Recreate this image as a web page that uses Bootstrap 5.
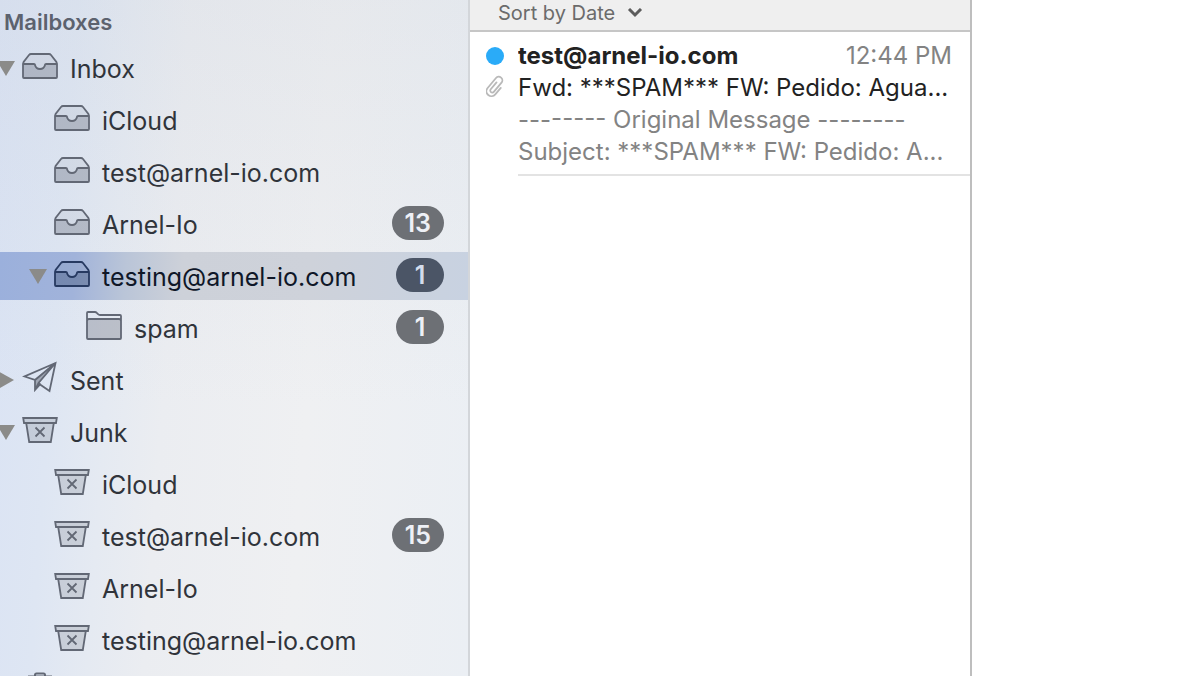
<!DOCTYPE html>
<html lang="en">
<head>
<meta charset="utf-8">
<meta name="viewport" content="width=device-width, initial-scale=1">
<title>Mail</title>
<link href="https://cdn.jsdelivr.net/npm/bootstrap@5.3.0/dist/css/bootstrap.min.css" rel="stylesheet">
<style>
  body { font-family: Inter, "Liberation Sans", sans-serif; color: #222; }
  .mail-app { display: grid; grid-template-columns: 470fr 502fr 216fr; }

  /* Mailbox sidebar */
  .mailboxes {
    border-right: 2px solid #d3d6da;
    background:
      linear-gradient(180deg, rgba(200, 206, 216, .22), rgba(230, 236, 250, 0) 60%),
      linear-gradient(94deg, #dae3f4 0%, #dee6f3 15%, #e5eaf2 26%, #ebedf1 37%, #eff0f2 65%, #ebeff4 100%);
  }
  .mailboxes-title { font-size: 22px; line-height: 44px; padding-left: 4px; font-weight: 600; color: #5c626e; }
  .mailbox { height: 48px; margin-bottom: 4px; padding-right: 24px; }
  .mailbox.level-1 { padding-left: 32px; }
  .mailbox.level-2 { padding-left: 64px; }
  .mailbox.active { background: linear-gradient(94deg, #9bb0dc 0%, #a1b3da 16%, #bac5d8 27%, #cdd1d9 39%, #ced2da 66%, #c8d2e1 100%); }
  .twisty { width: 22px; padding: 0 7px 0 0; }
  .twisty svg { width: 18px; height: 18px; fill: #8b8b89; }
  .mailbox-icon { width: 36px; height: 36px; margin-bottom: 10px; color: #626875; }
  .mailbox-link { font-size: 25px; line-height: 48px; gap: 12px; padding-top: 2px; color: #30343b; }
  .active .mailbox-link { color: #0f1728; }
  .active .mailbox-icon { color: #273a61; }
  .unread-count { min-width: 48px; height: 34px; margin-bottom: 2px; padding: 0 13px; border-radius: 17px; font-size: 25px; line-height: 34px; font-weight: 600; background: #6d7075; color: #eef0f6; }
  .active .unread-count { background: #4b5566; color: #d3dcec; }

  /* Message list */
  .message-list { border-right: 2px solid #bebebe; }
  .sort-bar { height: 32px; background: #efefef; border-bottom: 2px solid #c6c6c6; }
  .sort-button { font-size: 20px; line-height: 26px; padding-left: 28px; gap: 12px; color: #6b6b6b; }
  .message { padding: 8px 0 0 16px; gap: 14px; font-size: 24px; line-height: 32px; }
  .message-marks { width: 18px; }
  .message-marks > span { height: 31px; }
  .unread-dot { width: 18px; height: 18px; background: #2aabf8; }
  .message-body { border-bottom: 2px solid #e3e3e3; padding-bottom: 6px; }
  .message-body > div { padding-right: 18px; }
  .muted { color: #838383; }
</style>
</head>
<body>
<svg class="d-none" aria-hidden="true">
  <symbol id="down" viewBox="0 0 18 18"><path d="M0 2h18L9 17z"/></symbol>
  <symbol id="right" viewBox="0 0 18 18"><path d="M1 0v18l16-9z"/></symbol>
  <symbol id="tray" viewBox="0 0 36 36">
    <path d="M1 17h12c.5 4 2.500 5.500 5 5.500s4.500-1.500 5-5.500h12v14q0 1-1 1H2q-1 0-1-1z" fill="currentColor" fill-opacity=".34"/>
    <path d="M1 17 7.500 9q.8-1 2-1h17q1.200 0 2 1L35 17H23c-.5 4-2.500 5.500-5 5.500S13.500 21 13 17z" fill="currentColor" fill-opacity=".08"/>
    <path d="M1 18v13q0 1 1 1h32q1 0 1-1V18l-.6-2-5.400-7q-.8-1-2-1H9Q7.800 8 7 9l-5.400 7zM1.500 18h10q1.500 0 1.500 1c.6 2.500 2.500 4 5 4s4.400-1.500 5-4q0-1 1.500-1h10" fill="none" stroke="currentColor" stroke-width="1.800"/>
  </symbol>
  <symbol id="folder" viewBox="0 0 36 36">
    <path d="M1 14h34v18q0 1-1 1H2q-1 0-1-1z" fill="currentColor" fill-opacity=".32"/>
    <path d="M1 7q0-1 1-1h7q1 0 1.800 1l1.200 1.200q.8.800 2 .8h20q1 0 1 1v22q0 1-1 1H2q-1 0-1-1zM1 15q0-2 2-2h30q2 0 2 2" fill="none" stroke="currentColor" stroke-width="1.800"/>
  </symbol>
  <symbol id="plane" viewBox="0 0 36 36">
    <path d="M33 5 13 21v11l5-8z" fill="currentColor" fill-opacity=".5"/>
    <path d="M33.500 5 2.500 18.500 13 22v10l5-5.500 9.500 6.500zM33.500 5 13 22M33.500 5 16.500 25M13 32l3.500-7 2 1.500" fill="none" stroke="currentColor" stroke-width="1.800"/>
  </symbol>
  <symbol id="bin" viewBox="0 0 36 36">
    <path d="M1 8h34l-.8 5H1.800zM4 13h28l-3 19H7z" fill="currentColor" fill-opacity=".2"/>
    <path d="M1.200 8h33.600l-.8 5H2zM4.200 13 7.200 32h21.600l3-19M13.500 17.500l9 9M22.500 17.500l-9 9" fill="none" stroke="currentColor" stroke-width="1.800"/>
  </symbol>
  <symbol id="trash" viewBox="0 0 36 36">
    <path d="M13 7V5q0-1.500 1.500-1.500h7Q23 3.500 23 5v2M6 6.500h24M8 7l2 25h16l2-25" fill="none" stroke="currentColor" stroke-width="2"/>
  </symbol>
</svg>

<div class="mail-app vh-100 overflow-hidden">
  <nav class="mailboxes overflow-hidden" aria-label="Mailboxes">
    <h1 class="mailboxes-title m-0">Mailboxes</h1>

    <div class="mailbox d-flex align-items-center">
      <button class="twisty border-0 bg-transparent d-flex justify-content-end flex-shrink-0" aria-label="Collapse Inbox"><svg class="flex-shrink-0"><use href="#down"/></svg></button>
      <a href="#" class="mailbox-link d-flex align-items-center flex-grow-1 text-nowrap text-decoration-none"><svg class="mailbox-icon"><use href="#tray"/></svg>Inbox</a>
    </div>
    <div class="mailbox level-1 d-flex align-items-center">
      <span class="twisty flex-shrink-0"></span>
      <a href="#" class="mailbox-link d-flex align-items-center flex-grow-1 text-nowrap text-decoration-none"><svg class="mailbox-icon"><use href="#tray"/></svg>iCloud</a>
    </div>
    <div class="mailbox level-1 d-flex align-items-center">
      <span class="twisty flex-shrink-0"></span>
      <a href="#" class="mailbox-link d-flex align-items-center flex-grow-1 text-nowrap text-decoration-none"><svg class="mailbox-icon"><use href="#tray"/></svg>test@arnel-io.com</a>
    </div>
    <div class="mailbox level-1 d-flex align-items-center">
      <span class="twisty flex-shrink-0"></span>
      <a href="#" class="mailbox-link d-flex align-items-center flex-grow-1 text-nowrap text-decoration-none"><svg class="mailbox-icon"><use href="#tray"/></svg>Arnel-Io</a>
      <span class="unread-count text-center">13</span>
    </div>
    <div class="mailbox level-1 active d-flex align-items-center">
      <button class="twisty border-0 bg-transparent d-flex justify-content-end flex-shrink-0" aria-label="Collapse testing@arnel-io.com"><svg class="flex-shrink-0"><use href="#down"/></svg></button>
      <a href="#" class="mailbox-link d-flex align-items-center flex-grow-1 text-nowrap text-decoration-none" aria-current="page"><svg class="mailbox-icon"><use href="#tray"/></svg>testing@arnel-io.com</a>
      <span class="unread-count text-center">1</span>
    </div>
    <div class="mailbox level-2 d-flex align-items-center">
      <span class="twisty flex-shrink-0"></span>
      <a href="#" class="mailbox-link d-flex align-items-center flex-grow-1 text-nowrap text-decoration-none"><svg class="mailbox-icon"><use href="#folder"/></svg>spam</a>
      <span class="unread-count text-center">1</span>
    </div>
    <div class="mailbox d-flex align-items-center">
      <button class="twisty border-0 bg-transparent d-flex justify-content-end flex-shrink-0" aria-label="Expand Sent"><svg class="flex-shrink-0"><use href="#right"/></svg></button>
      <a href="#" class="mailbox-link d-flex align-items-center flex-grow-1 text-nowrap text-decoration-none"><svg class="mailbox-icon"><use href="#plane"/></svg>Sent</a>
    </div>
    <div class="mailbox d-flex align-items-center">
      <button class="twisty border-0 bg-transparent d-flex justify-content-end flex-shrink-0" aria-label="Collapse Junk"><svg class="flex-shrink-0"><use href="#down"/></svg></button>
      <a href="#" class="mailbox-link d-flex align-items-center flex-grow-1 text-nowrap text-decoration-none"><svg class="mailbox-icon"><use href="#bin"/></svg>Junk</a>
    </div>
    <div class="mailbox level-1 d-flex align-items-center">
      <span class="twisty flex-shrink-0"></span>
      <a href="#" class="mailbox-link d-flex align-items-center flex-grow-1 text-nowrap text-decoration-none"><svg class="mailbox-icon"><use href="#bin"/></svg>iCloud</a>
    </div>
    <div class="mailbox level-1 d-flex align-items-center">
      <span class="twisty flex-shrink-0"></span>
      <a href="#" class="mailbox-link d-flex align-items-center flex-grow-1 text-nowrap text-decoration-none"><svg class="mailbox-icon"><use href="#bin"/></svg>test@arnel-io.com</a>
      <span class="unread-count text-center">15</span>
    </div>
    <div class="mailbox level-1 d-flex align-items-center">
      <span class="twisty flex-shrink-0"></span>
      <a href="#" class="mailbox-link d-flex align-items-center flex-grow-1 text-nowrap text-decoration-none"><svg class="mailbox-icon"><use href="#bin"/></svg>Arnel-Io</a>
    </div>
    <div class="mailbox level-1 d-flex align-items-center">
      <span class="twisty flex-shrink-0"></span>
      <a href="#" class="mailbox-link d-flex align-items-center flex-grow-1 text-nowrap text-decoration-none"><svg class="mailbox-icon"><use href="#bin"/></svg>testing@arnel-io.com</a>
    </div>
    <div class="mailbox d-flex align-items-center">
      <span class="twisty flex-shrink-0"></span>
      <a href="#" class="mailbox-link d-flex align-items-center flex-grow-1" aria-label="Trash"><svg class="mailbox-icon"><use href="#trash"/></svg></a>
    </div>
  </nav>

  <section class="message-list overflow-hidden" aria-label="Messages">
    <div class="sort-bar">
      <button class="sort-button d-flex align-items-center border-0 bg-transparent py-0 pe-0">Sort by Date
        <svg width="16" height="10" viewBox="0 0 16 10" aria-hidden="true"><path d="M2 1l6 6 6-6" fill="none" stroke="#5c5c5c" stroke-width="3"/></svg>
      </button>
    </div>
    <article class="message d-flex">
      <div class="message-marks flex-shrink-0">
        <span class="d-flex align-items-center"><span class="unread-dot rounded-circle"></span></span>
        <span class="d-flex align-items-center">
          <svg class="flex-shrink-0" width="18" height="24" viewBox="-9 -12 18 24" fill="none" stroke="#b9b9b9" stroke-width="1.800" stroke-linecap="round" aria-hidden="true"><path transform="rotate(40)" d="M5 -3V5.500a5 5 0 0 1-10 0V-7.500a3.600 3.600 0 0 1 7.200 0V4.500a2 2 0 0 1-4 0V-4.500"/></svg>
        </span>
      </div>
      <div class="message-body flex-grow-1 overflow-hidden text-nowrap">
        <div class="d-flex justify-content-between"><span class="fw-bold">test@arnel-io.com</span><time class="muted">12:44 PM</time></div>
        <div>Fwd: ***SPAM*** FW: Pedido: Agua...</div>
        <div class="muted">-------- Original Message --------</div>
        <div class="muted">Subject: ***SPAM*** FW: Pedido: A...</div>
      </div>
    </article>
  </section>

  <main aria-label="Message"></main>
</div>
<script src="https://cdn.jsdelivr.net/npm/bootstrap@5.3.0/dist/js/bootstrap.bundle.min.js"></script>
</body>
</html>
